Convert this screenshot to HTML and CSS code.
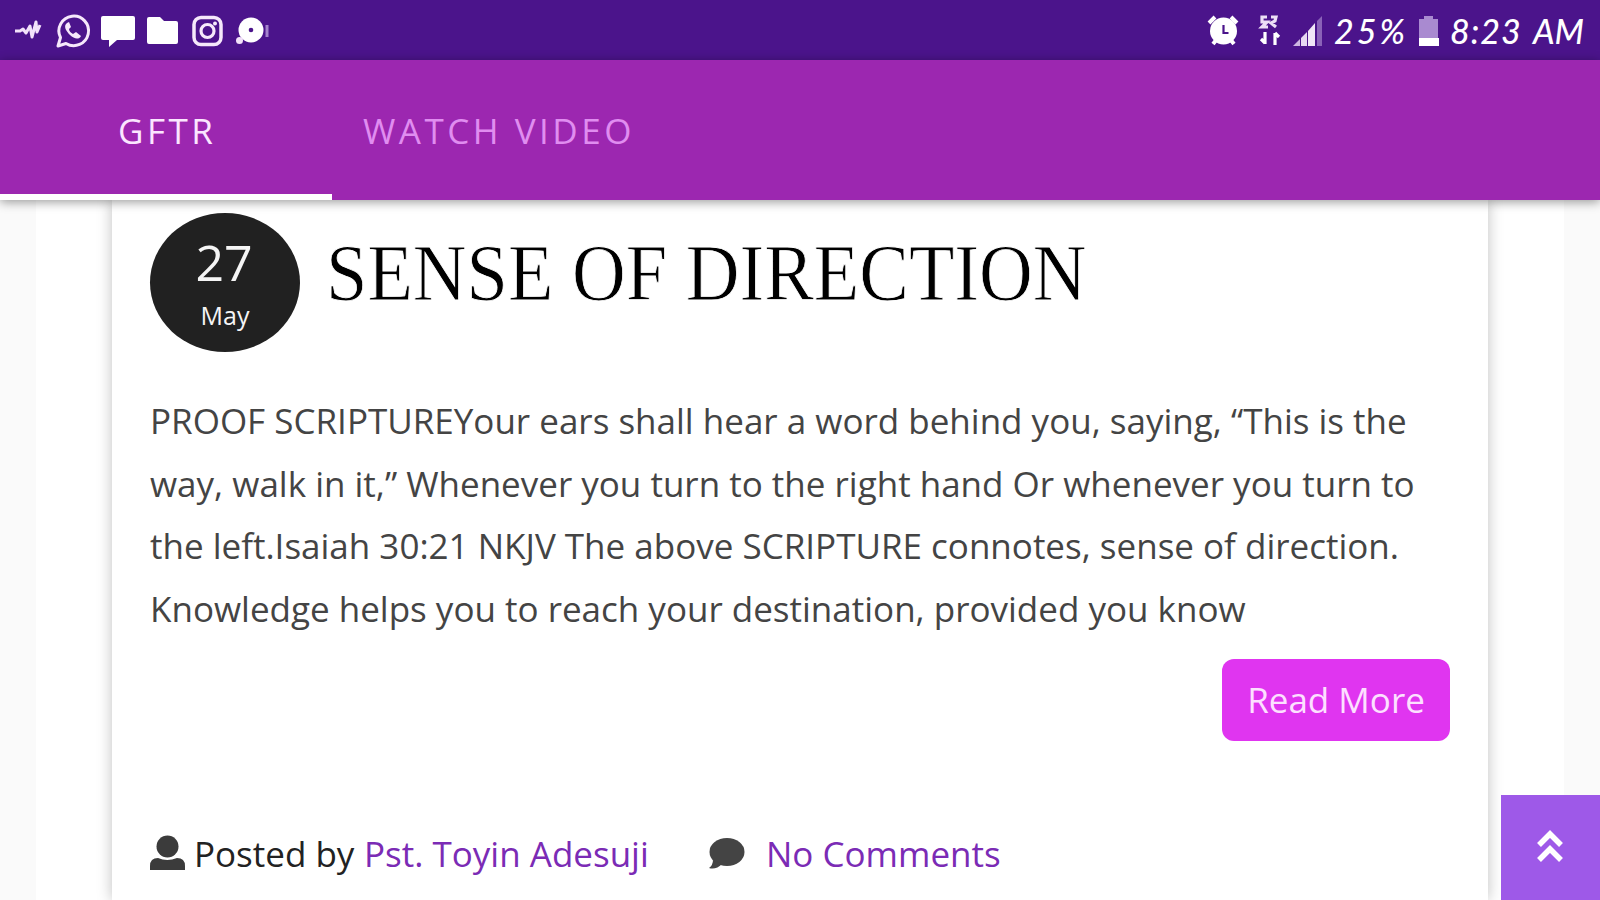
FILE: index.html
```
<!DOCTYPE html>
<html lang="en">
<head>
    <meta charset="UTF-8">
    <meta name="viewport" content="width=device-width, initial-scale=1.0">
    <title>GFTR</title>
    <link rel="stylesheet" href="styles.css">
</head>
<body>
    <div class="status-bar">
        <svg class="status-icons" width="280" height="60" viewBox="0 0 280 60">
            <!-- audio wave -->
            <path d="M15 31h5l3-2 3 4 4-7 2 11 4-15 1 10 3-7" fill="none" stroke="#f3e2fa" stroke-width="3" stroke-linejoin="round"/>
            <!-- whatsapp -->
            <path d="M58 46l2.500-8.500A14.800 14.800 0 1 1 66 43.500z" fill="none" stroke="#f6e8fb" stroke-width="3" stroke-linejoin="round"/>
            <path d="M67 23c-4 3-1 8 3 12s9 5 11 1l-5-4-3 2c-2-1-4-3-4-5l2-2-2-5z" fill="#f6e8fb"/>
            <!-- message -->
            <path d="M103 16h30q2 0 2 2v20q0 2-2 2h-16l-8 7v-7h-6q-2 0-2-2V18q0-2 2-2z" fill="#fff"/>
            <!-- folder -->
            <path d="M149 17h11l4 4h12q2 0 2 2v19q0 2-2 2h-27q-2 0-2-2V19q0-2 2-2z" fill="#fff"/>
            <!-- instagram -->
            <rect x="194" y="17.500" width="27" height="27" rx="7" fill="none" stroke="#f6e8fb" stroke-width="3.500"/>
            <circle cx="207.500" cy="31" r="6.500" fill="none" stroke="#f6e8fb" stroke-width="3.200"/>
            <circle cx="215" cy="23.500" r="2" fill="#f6e8fb"/>
            <!-- disc -->
            <circle cx="251" cy="30" r="12.500" fill="#fff"/>
            <circle cx="251" cy="30" r="2.300" fill="#4b148b"/>
            <circle cx="239.500" cy="40.500" r="3.500" fill="#f3e2fa"/>
            <path d="M267 25v12" stroke="#a583cc" stroke-width="3"/>
        </svg>
        <div class="status-right">
            <svg width="124" height="60" viewBox="1206 0 124 60">
                <!-- alarm -->
                <path d="M1209 23l6-6M1237 23l-6-6M1213 44l4-5M1234 44l-4-5" stroke="#fff" stroke-width="4"/>
                <circle cx="1223.500" cy="31" r="13.500" fill="#fff"/>
                <path d="M1223.500 25v8h5" fill="none" stroke="#4b148b" stroke-width="2.200"/>
                <!-- data -->
                <path d="M1267 17h-5v5h5l-5 5h6M1271 17h5l-1 4-4 2 5 4" fill="none" stroke="#eddff6" stroke-width="3.200"/>
                <path d="M1265 32v12M1261 39l4 4M1275 45V33M1279 37l-4-4" fill="none" stroke="#fff" stroke-width="3.200"/>
                <!-- signal -->
                <path d="M1293 46l7-7v7z" fill="#cdb5e2"/>
                <path d="M1301 46v-8l6-6v14z" fill="#e6d8f1"/>
                <path d="M1308 46V31l7-8v23z" fill="#f0e6f7"/>
                <path d="M1317 46V21l5-5v30z" fill="#8a62b8"/>
            </svg>
            <span class="battery-text">25%</span>
            <svg class="battery" width="20" height="32" viewBox="0 0 20 32">
                <path d="M5 0h9v3h5v19H0V3h5z" fill="#a98ad0"/>
                <rect y="22" width="20" height="8" fill="#fff"/>
            </svg>
            <span class="clock">8:23</span>
            <span class="ampm">AM</span>
        </div>
    </div>

    <nav class="tabs">
        <a class="tab active">GFTR</a>
        <a class="tab">WATCH VIDEO</a>
    </nav>

    <main class="page">
        <article class="post">
            <header class="post-header">
                <div class="date">
                    <span class="day">27</span>
                    <span class="month">May</span>
                </div>
                <h1>SENSE OF DIRECTION</h1>
            </header>

            <p class="excerpt">
                PROOF SCRIPTUREYour ears shall hear a word behind you, saying, “This is the<br>
                way, walk in it,” Whenever you turn to the right hand Or whenever you turn to<br>
                the left.Isaiah 30:21 NKJV The above SCRIPTURE connotes, sense of direction.<br>
                Knowledge helps you to reach your destination, provided you know
            </p>

            <a class="read-more">Read More</a>

            <footer class="meta">
                <svg class="user" width="36" height="36" viewBox="0 0 36 36">
                    <circle cx="17.500" cy="11.500" r="11" fill="#3b3b3b"/>
                    <path d="M0 35v-4q0-8 8-8 9 4 19 0 8 0 8 8v4z" fill="#3b3b3b"/>
                </svg>
                <span class="posted">Posted by</span>
                <a class="author">Pst. Toyin Adesuji</a>
                <svg class="comment" width="36" height="32" viewBox="0 0 36 32">
                    <ellipse cx="18" cy="14" rx="17.500" ry="14" fill="#444"/>
                    <path d="M4 22q0 5-4 8 7 2 13-4z" fill="#444"/>
                </svg>
                <a class="comments">No Comments</a>
            </footer>
        </article>
    </main>

    <a class="to-top">
        <svg width="28" height="34" viewBox="0 0 28 34">
            <path d="M3 15L14 4l11 11M3 30l11-11 11 11" fill="none" stroke="#fff" stroke-width="5.500"/>
        </svg>
    </a>
</body>
</html>
```
FILE: styles.css
```
* {
    box-sizing: border-box;
}
body {
    margin: 0;
    height: 900px;
    overflow: hidden;
    background-color: #fafafa;
    font-family: "Open Sans", sans-serif;
    color: #333;
}
svg {
    display: block;
    flex: none;
}
.status-bar {
    display: flex;
    justify-content: space-between;
    height: 60px;
    background-color: #4b148b;
    color: #fff;
}
.status-right {
    display: flex;
    width: 394px;
    font-family: Lato, sans-serif;
    font-style: italic;
    font-weight: 500;
    font-size: 34px;
    line-height: 62px;
    white-space: nowrap;
}
.battery-text {
    width: 89px;
    padding-left: 4px;
    letter-spacing: 3px;
}
.battery {
    margin-top: 16px;
}
.clock {
    width: 94px;
    padding-left: 11px;
    letter-spacing: 1px;
}
.tabs {
    display: flex;
    position: relative;
    z-index: 2;
    height: 140px;
    background-color: #9c27b0;
    box-shadow: 0 2px 10px rgba(0, 0, 0, 0.4);
}
.tab {
    padding: 0 31px;
    font-size: 35px;
    line-height: 142px;
    letter-spacing: 3.5px;
    color: #e08df0;
    white-space: nowrap;
}
.tab.active {
    width: 332px;
    padding-left: 118px;
    border-bottom: 6px solid #fff;
    color: #fbe6ff;
    font-weight: 500;
}
.page {
    width: 1528px;
    height: 700px;
    margin: 0 auto;
    padding: 0 76px;
    background-color: #fff;
}
.post {
    height: 700px;
    padding: 13px 38px 0;
    background-color: #fff;
    box-shadow: 0 0 14px rgba(0, 0, 0, 0.25);
}
.post-header {
    display: flex;
    height: 177px;
}
.date {
    flex: none;
    width: 150px;
    height: 139px;
    padding-top: 21px;
    border-radius: 50%;
    background-color: #212121;
    color: #f5f5f5;
    text-align: center;
}
.day, .month {
    display: block;
    font-weight: 500;
}
.day {
    font-size: 50px;
    line-height: 56px;
    margin-right: 2px;
}
.month {
    font-size: 25px;
    line-height: 50px;
}
h1 {
    margin: 20px 0 0 26px;
    font-family: "Liberation Serif", serif;
    font-size: 80px;
    font-weight: normal;
    line-height: 80px;
    color: #000;
    white-space: nowrap;
    -webkit-text-stroke: 0.8px #fff;
    transform: scaleX(0.93);
    transform-origin: left;
}
.excerpt {
    margin: 0;
    font-size: 35px;
    line-height: 62.5px;
    color: #444;
    white-space: nowrap;
}
.read-more {
    display: block;
    width: 228px;
    height: 82px;
    margin: 19px 0 0 auto;
    border-radius: 12px;
    background-color: #e035f0;
    color: #fde0ff;
    font-size: 35px;
    line-height: 82px;
    text-align: center;
}
.meta {
    display: flex;
    height: 62px;
    margin-top: 82px;
    font-size: 35px;
    line-height: 62px;
    white-space: nowrap;
}
.user {
    margin-top: 12px;
}
.posted {
    width: 178px;
    padding-left: 8px;
    color: #222;
}
.author, .comments {
    color: #7b2bb5;
}
.author {
    width: 345px;
}
.comment {
    margin-top: 15px;
}
.comments {
    padding-left: 21px;
}
.to-top {
    position: absolute;
    z-index: 3;
    right: 0;
    bottom: 0;
    width: 99px;
    height: 105px;
    padding: 35px 0 0 35px;
    background-color: #9e59e8;
}
```
